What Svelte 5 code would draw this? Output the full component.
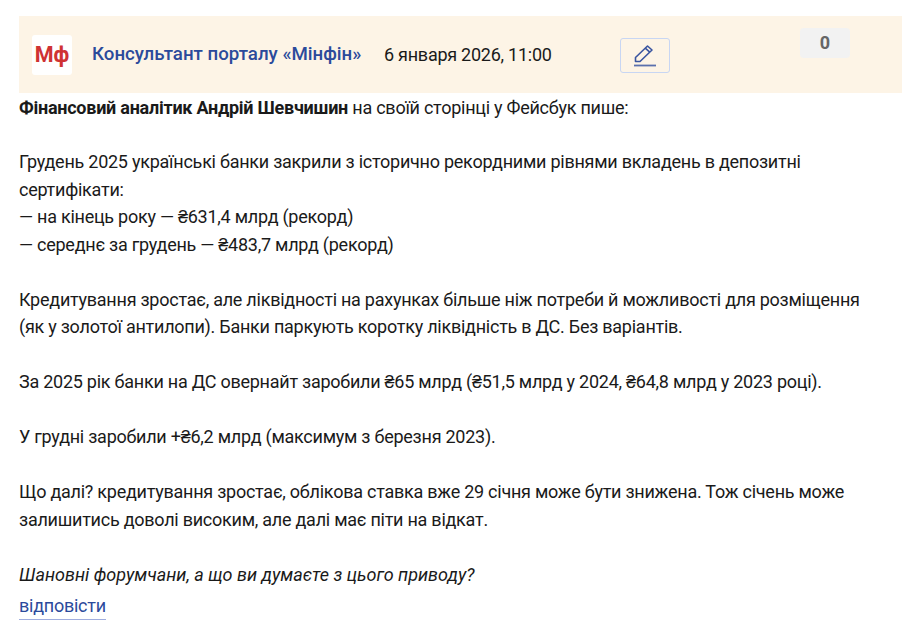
<script>
  const lines = [
    ['Грудень 2025 українські банки закрили з історично рекордними рівнями вкладень в депозитні', 'сертифікати:', '— на кінець року — ₴631,4 млрд (рекорд)', '— середнє за грудень — ₴483,7 млрд (рекорд)'],
    ['Кредитування зростає, але ліквідності на рахунках більше ніж потреби й можливості для розміщення', '(як у золотої антилопи). Банки паркують коротку ліквідність в ДС. Без варіантів.'],
    ['За 2025 рік банки на ДС овернайт заробили ₴65 млрд (₴51,5 млрд у 2024, ₴64,8 млрд у 2023 році).'],
    ['У грудні заробили +₴6,2 млрд (максимум з березня 2023).'],
    ['Що далі? кредитування зростає, облікова ставка вже 29 січня може бути знижена. Тож січень може', 'залишитись доволі високим, але далі має піти на відкат.']
  ];
</script>

<main class="post">
  <header class="head">
    <div class="logo">Мф</div>
    <a class="author" href="#a">Консультант порталу «Мінфін»</a>
    <span class="date">6 января 2026, 11:00</span>
    <button class="edit" aria-label="edit">
      <svg width="24" height="24" viewBox="0 0 24 24" fill="none" stroke="#3a55a0" stroke-width="1.6">
        <path d="M2.5 17.5 L2.5 13.5 L14.5 2 L19 6 L7 17.5 Z" stroke-linejoin="round"/>
        <path d="M12.2 4.2 L16.8 8.2"/>
        <path d="M1 21.5 H23" stroke-width="1.8" stroke="#5a70ad"/>
      </svg>
    </button>
    <div class="count">0</div>
  </header>

  <div class="body">
    <p class="intro"><b>Фінансовий аналітик Андрій Шевчишин</b> на своїй сторінці у Фейсбук пише:</p>
    {#each lines as para}
      <p class="para">
        {#each para as l}<span class="line">{l}</span>{/each}
      </p>
    {/each}
    <p class="para"><i>Шановні форумчани, а що ви думаєте з цього приводу?</i></p>
  </div>
  <a class="reply" href="#r">відповісти</a>
</main>

<style>
  :global(body) { margin: 0; background: #fff; }
  .post {
    padding: 16px 11px 0 19px;
    font-family: Roboto, sans-serif;
    font-size: 18px;
    letter-spacing: -0.25px;
    line-height: 27.5px;
    color: #1a1a1a;
  }
  .head {
    height: 77px;
    background: #fdf4e6;
    display: flex;
    align-items: flex-start;
    padding-left: 13px;
    box-sizing: border-box;
  }
  .logo {
    width: 40px;
    height: 40px;
    margin-top: 19px;
    background: #fff;
    border-radius: 3px;
    color: #cf3233;
    font-weight: 700;
    font-size: 21.5px;
    letter-spacing: 0;
    line-height: 40px;
    text-align: center;
  }
  .author {
    margin: 25px 0 0 20px;
    width: 292px;
    color: #2b4a9b;
    font-weight: 500;
    font-size: 18.7px;
    letter-spacing: 0;
    text-decoration: none;
    white-space: nowrap;
  }
  .date { margin-top: 25px; width: 236px; white-space: nowrap; }
  .edit {
    width: 50px;
    height: 35px;
    margin-top: 22px;
    padding: 0;
    background: transparent;
    border: 1px solid #c8d6f3;
    border-radius: 3px;
    display: flex;
    align-items: center;
    justify-content: center;
  }
  .count {
    width: 50px;
    height: 30px;
    margin: 12px 0 0 130px;
    background: #f2f2f2;
    border-radius: 4px;
    color: #666;
    font-weight: 700;
    font-size: 18px;
    letter-spacing: 0;
    line-height: 30px;
    text-align: center;
  }
  p { margin: 0; }
  .body { padding-top: 1px; }
  .para { margin-top: 27.5px; }
  .intro { margin-bottom: -1px; }
  .line { display: block; white-space: nowrap; }
  i { letter-spacing: 0; }
  .reply {
    display: inline-block;
    color: #2b4a9b;
    text-decoration: none;
    border-bottom: 1px solid #9fadde;
    margin-top: 5px;
    line-height: 26px;
    font-size: 18px;
    letter-spacing: -0.25px;
  }
</style>
